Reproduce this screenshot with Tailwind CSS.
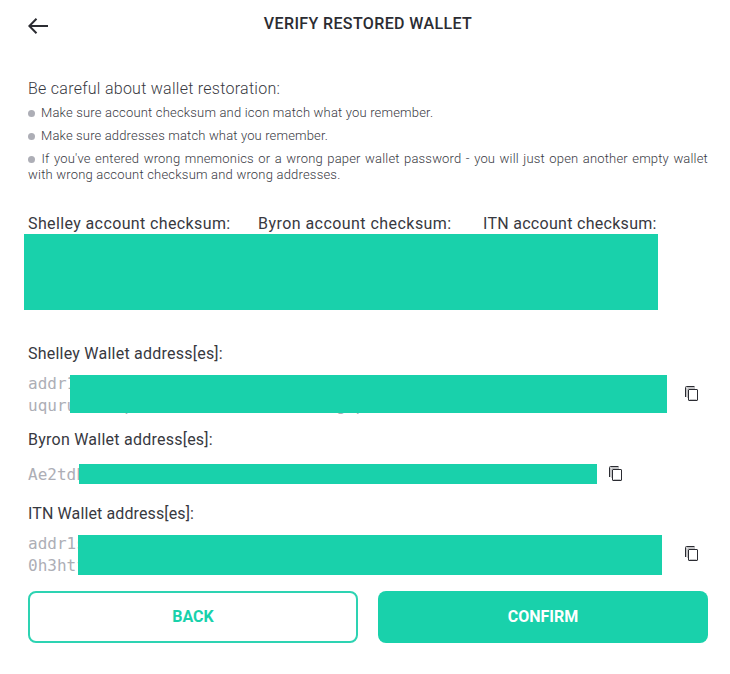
<!DOCTYPE html>
<html lang="en">
<head>
<meta charset="utf-8">
<title>Verify restored wallet</title>
<script src="https://cdn.jsdelivr.net/npm/@tailwindcss/browser@4"></script>
</head>
<body class="bg-white font-['Roboto',sans-serif] text-[16px] text-[#38393f]">
<main class="h-[674px] w-[730px] overflow-hidden pr-[22px] pl-7">
  <header class="relative flex h-12 items-start justify-center pt-[13px]">
    <button class="absolute top-[17px] left-0" aria-label="Go back">
      <svg class="block" width="21" height="18" viewBox="0 0 21 18" fill="none" stroke="#2b2c32" stroke-width="2"><path d="M20 9H1.5M8.5 1.8L1.3 9l7.2 7.2"/></svg>
    </button>
    <h1 class="leading-[22px] font-medium tracking-[0.38px] text-[#2b2c32]">VERIFY RESTORED WALLET</h1>
  </header>

  <section class="pt-[30px] font-light">
    <p class="leading-[22px] tracking-[0.27px]">Be careful about wallet restoration:</p>
    <ul class="mt-[5px] space-y-[7px] text-[13px] leading-4 tracking-[0.18px]">
      <li class="flex items-center gap-[6px]"><i class="size-[7px] rounded-full bg-[#adaeb6]"></i><span>Make sure account checksum and icon match what you remember.</span></li>
      <li class="flex items-center gap-[6px]"><i class="size-[7px] rounded-full bg-[#adaeb6]"></i><span class="tracking-[0.15px]">Make sure addresses match what you remember.</span></li>
      <li>
        <p class="[text-align-last:justify]"><i class="mr-[2px] inline-block size-[7px] rounded-full bg-[#adaeb6]"></i> If you've entered wrong mnemonics or a wrong paper wallet password - you will just open another empty wallet</p>
        <p class="tracking-[0.2px]">with wrong account checksum and wrong addresses.</p>
      </li>
    </ul>
  </section>

  <section class="mt-[30px] h-[97px]">
    <div class="flex h-[21px] leading-[22px]">
      <p class="w-[230px] tracking-[0.38px]">Shelley account checksum:</p>
      <p class="w-[225px] tracking-[0.45px]">Byron account checksum:</p>
      <p class="tracking-[0.29px]">ITN account checksum:</p>
    </div>
    <div class="-ml-1 h-[76px] w-[634px] bg-[#19d1ab]"></div>
  </section>

  <section class="mt-[33px]">
    <h2 class="leading-[22px] tracking-[0.23px]">Shelley Wallet address[es]:</h2>
    <div class="relative mt-[7px] h-11 pt-px font-['DejaVu_Sans_Mono',monospace] leading-[22px] whitespace-pre text-[#adaeb6]"><p>addr1</p><p>uquru     p                     g p</p>
      <div class="absolute top-[3px] left-[42px] h-[38px] w-[597px] bg-[#19d1ab]"></div>
      <svg class="absolute top-3.5 left-[657px]" width="14" height="16" viewBox="0 0 14 16" fill="none" stroke="#2b2c32"><path d="M9.5.5H1.5a1 1 0 0 0-1 1v9.5"/><path stroke="#c4c4c6" d="M10 1.5H1.5V11M10 2.5H3a.5.5 0 0 0-.5.5v9M4.5 13.5h7"/><rect x="3.5" y="3.5" width="9" height="11" rx=".5"/></svg>
    </div>
  </section>

  <section class="mt-[13px]">
    <h2 class="leading-[22px] tracking-[0.24px]">Byron Wallet address[es]:</h2>
    <div class="relative mt-3 h-[22px] pt-px font-['DejaVu_Sans_Mono',monospace] leading-[22px] text-[#adaeb6]"><p>Ae2tdP</p>
      <div class="absolute top-px left-[51px] h-5 w-[518px] bg-[#19d1ab]"></div>
      <svg class="absolute top-[3px] left-[581px]" width="14" height="16" viewBox="0 0 14 16" fill="none" stroke="#2b2c32"><path d="M9.5.5H1.5a1 1 0 0 0-1 1v9.5"/><path stroke="#c4c4c6" d="M10 1.5H1.5V11M10 2.5H3a.5.5 0 0 0-.5.5v9M4.5 13.5h7"/><rect x="3.5" y="3.5" width="9" height="11" rx=".5"/></svg>
    </div>
  </section>

  <section class="mt-[18px]">
    <h2 class="leading-[22px] tracking-[0.12px]">ITN Wallet address[es]:</h2>
    <div class="relative mt-[7px] h-11 pt-px font-['DejaVu_Sans_Mono',monospace] leading-[22px] text-[#adaeb6]"><p>addr1s</p><p>0h3htf</p>
      <div class="absolute top-[3px] left-[50px] h-10 w-[584px] bg-[#19d1ab]"></div>
      <svg class="absolute top-3.5 left-[657px]" width="14" height="16" viewBox="0 0 14 16" fill="none" stroke="#2b2c32"><path d="M9.5.5H1.5a1 1 0 0 0-1 1v9.5"/><path stroke="#c4c4c6" d="M10 1.5H1.5V11M10 2.5H3a.5.5 0 0 0-.5.5v9M4.5 13.5h7"/><rect x="3.5" y="3.5" width="9" height="11" rx=".5"/></svg>
    </div>
  </section>

  <div class="mt-[15px] flex gap-5 font-bold">
    <button class="h-[52px] w-[330px] rounded-lg border-2 border-[#2dd3b2] text-[#19d1ab]">BACK</button>
    <button class="h-[52px] w-[330px] rounded-lg bg-[#19d1ab] text-white">CONFIRM</button>
  </div>
</main>
</body>
</html>
